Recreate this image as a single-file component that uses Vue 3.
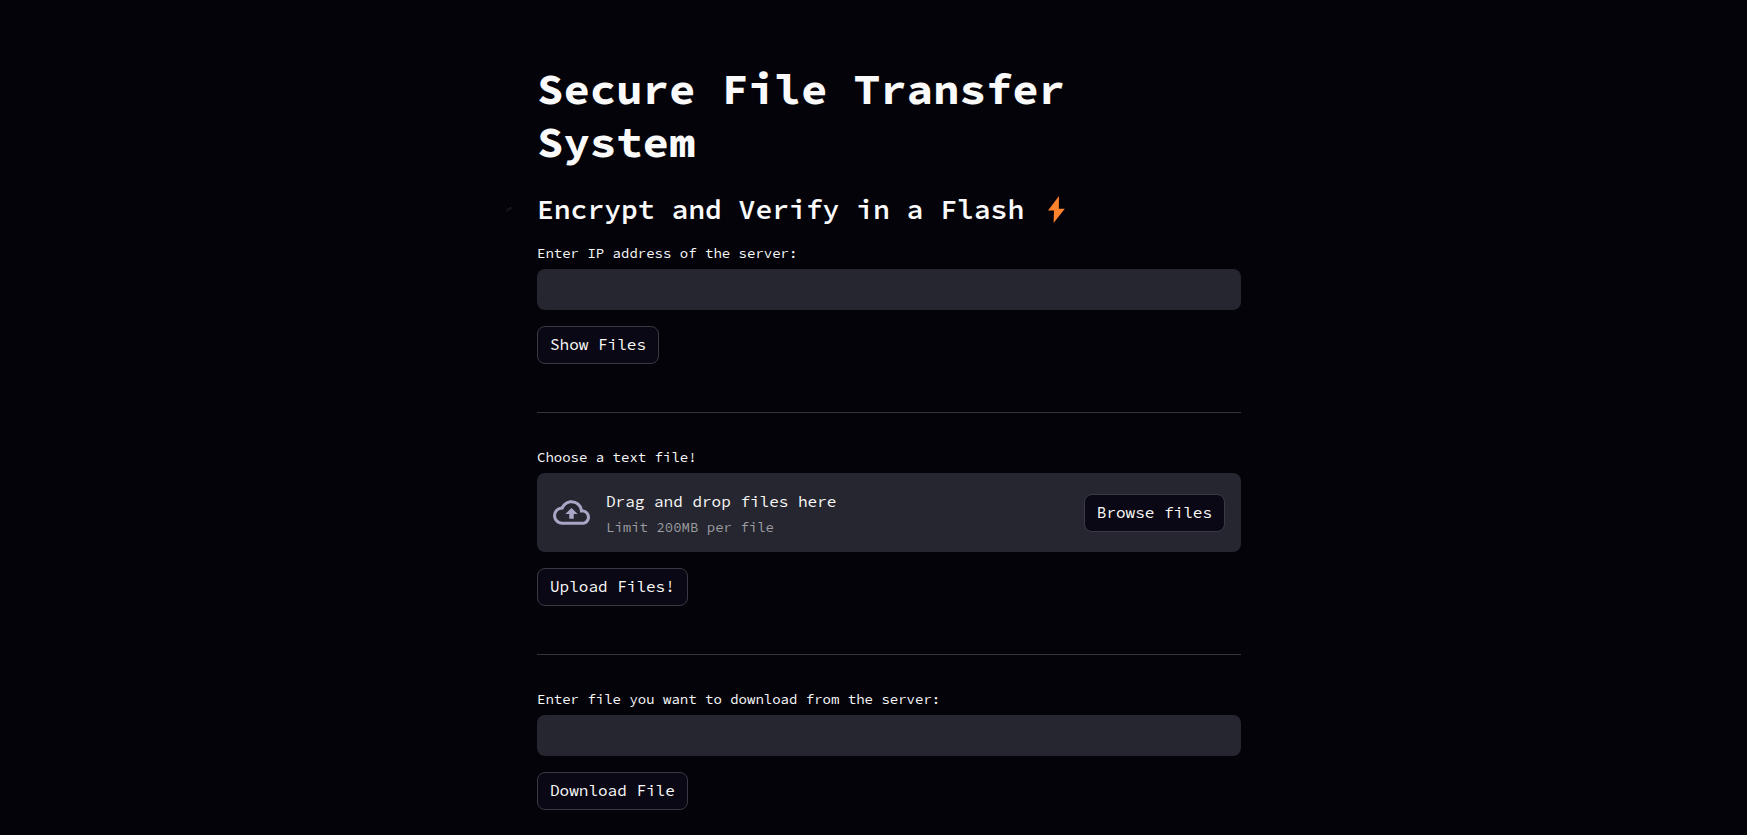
<script setup>
import { ref } from 'vue'

const serverIp = ref('')
const downloadName = ref('')
const picker = ref(null)
</script>

<template>
  <main class="page">
    <div class="content">
      <header>
        <h1>Secure File Transfer System</h1>
        <h2>
          <a class="anchor" href="#flash" aria-label="Link to heading">
            <svg viewBox="0 0 6 6" aria-hidden="true">
              <path d="M1 5.2 2.8 3.4M3.2 2.8 5 1M.8 3.6 2 2.4M3.8 3.8 5.2 2.4" />
            </svg>
          </a>
          <span id="flash">Encrypt and Verify in a Flash</span>
          <svg class="bolt" viewBox="0 0 17 27" aria-hidden="true">
            <path d="M11 0 0 14.6h6L5.6 27 16.8 12.8h-6z" />
          </svg>
        </h2>
      </header>

      <section>
        <label for="server-ip">Enter IP address of the server:</label>
        <input id="server-ip" v-model="serverIp" class="field" type="text" />
        <button type="button">Show Files</button>
      </section>

      <hr />

      <section>
        <label for="upload">Choose a text file!</label>
        <div class="dropzone">
          <svg class="cloud" viewBox="0 0 24 24" aria-hidden="true">
            <path
              d="M19.35 10.04A7.49 7.49 0 0 0 12 4C9.11 4 6.6 5.64 5.35 8.04A5.994 5.994 0 0 0 0 14c0 3.31 2.69 6 6 6h13c2.76 0 5-2.24 5-5 0-2.64-2.05-4.78-4.65-4.96zM19 18H6c-2.21 0-4-1.79-4-4s1.79-4 4-4h.71C7.37 7.69 9.48 6 12 6c3.04 0 5.5 2.46 5.5 5.5v.5H19c1.66 0 3 1.34 3 3s-1.34 3-3 3zM8 13h2.55v3h2.9v-3H16l-4-4z"
            />
          </svg>
          <div class="hint">
            <span>Drag and drop files here</span>
            <small>Limit 200MB per file</small>
          </div>
          <input id="upload" ref="picker" type="file" multiple hidden />
          <button type="button" @click="picker.click()">Browse files</button>
        </div>
        <button type="button">Upload Files!</button>
      </section>

      <hr />

      <section>
        <label for="download">Enter file you want to download from the server:</label>
        <input id="download" v-model="downloadName" class="field" type="text" />
        <button type="button">Download File</button>
      </section>
    </div>
  </main>
</template>

<style>
body {
  margin: 0;
  background: #04030a;
}
</style>

<style scoped>
.page {
  display: flex;
  justify-content: center;
  padding: 62px 0 16px 31px;
  color: #fafafa;
  font: 16px/24px "Source Code Pro", "DejaVu Sans Mono", monospace;
}
.content {
  width: 100%;
  max-width: 704px;
}
h1 {
  margin: 0 0 24px;
  font-size: 44px;
  line-height: 53px;
  font-weight: 700;
}
h2 {
  position: relative;
  display: flex;
  align-items: center;
  gap: 24px;
  margin: 0 0 16px;
  font-size: 28px;
  line-height: 34px;
  font-weight: 600;
}
.anchor {
  position: absolute;
  left: -31px;
  top: 14px;
  display: flex;
}
.anchor svg {
  width: 6px;
  height: 6px;
  fill: none;
  stroke: #2b2a31;
}
.bolt {
  width: 17px;
  height: 27px;
  fill: #ff822d;
}
section {
  display: flex;
  flex-direction: column;
  align-items: flex-start;
}
label {
  margin-bottom: 5px;
  font-size: 14px;
  line-height: 22px;
}
.field {
  box-sizing: border-box;
  width: 100%;
  height: 41px;
  margin: 0 0 16px;
  padding: 8px 12px;
  border: 0;
  border-radius: 8px;
  outline-color: #ff4b4b;
  background: #25262f;
  color: inherit;
  font: inherit;
}
button {
  padding: 5px 12px 7px;
  border: 1px solid #3b3a43;
  border-radius: 8px;
  background: #0a0814;
  color: inherit;
  font: inherit;
  cursor: pointer;
}
hr {
  height: 1px;
  margin: 48px 0 33px;
  border: 0;
  background: #35343c;
}
.dropzone {
  box-sizing: border-box;
  display: flex;
  align-items: center;
  gap: 16px;
  width: 100%;
  margin-bottom: 16px;
  padding: 16px;
  border-radius: 8px;
  background: #25262f;
}
.cloud {
  flex: none;
  width: 37px;
  height: 37px;
  fill: #a9a5c4;
}
.hint {
  display: flex;
  flex: 1;
  flex-direction: column;
  gap: 6px;
}
.hint small {
  color: #9c9ca1;
  font-size: 14px;
  line-height: 17px;
}
</style>
